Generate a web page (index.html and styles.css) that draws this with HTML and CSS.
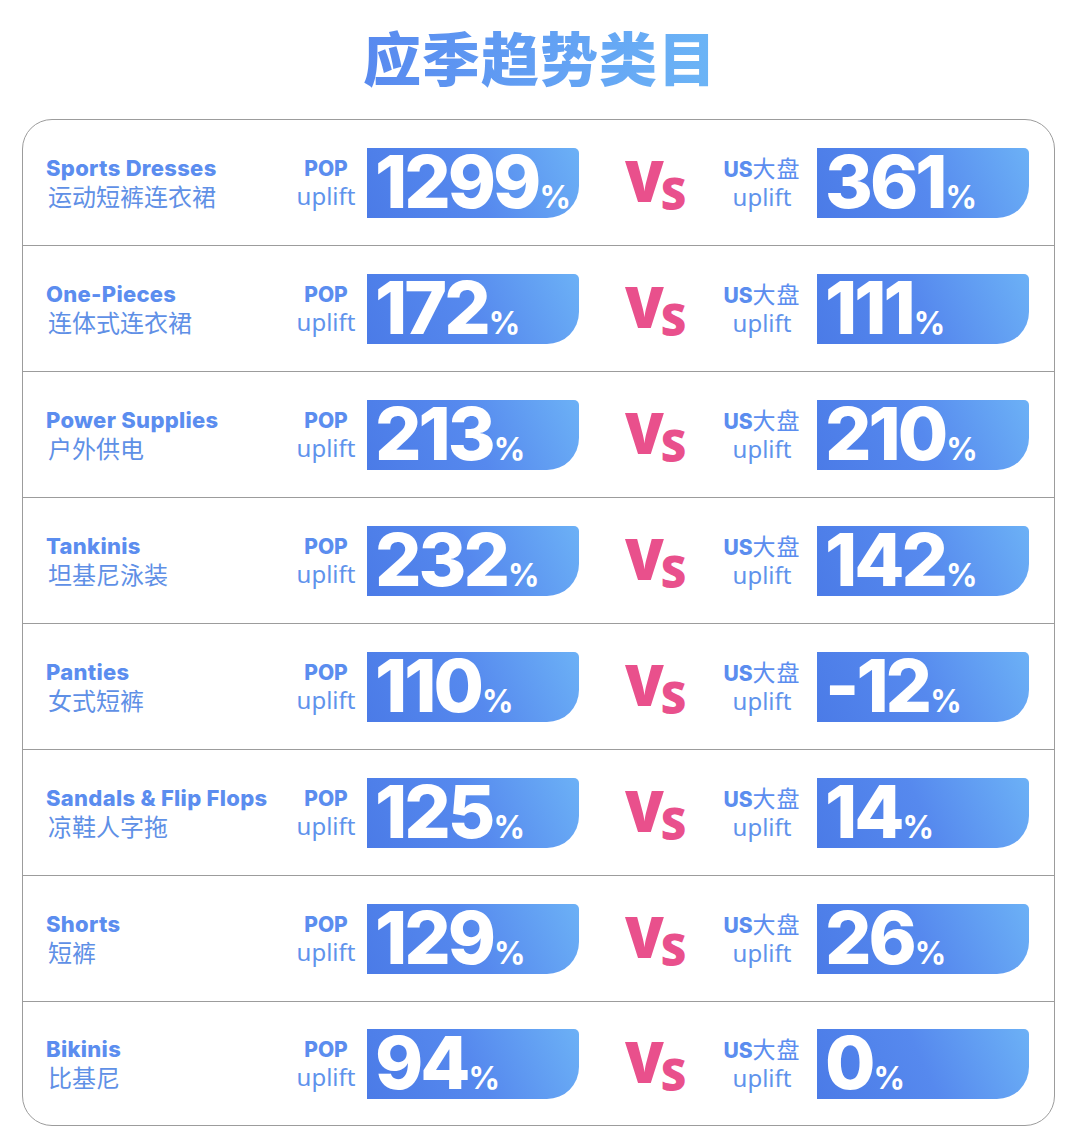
FILE: index.html
```html
<!DOCTYPE html>
<html lang="zh-CN">
<head>
  <meta charset="UTF-8" />
  <meta name="viewport" content="width=device-width, initial-scale=1.0"/>
  <title>应季趋势类目</title>
  <link rel="stylesheet" href="styles.css">
</head>
<body>

<h1 class="title">应季趋势类目</h1>

<div class="card">
  <div class="row">
    <div class="name"><b>Sports Dresses</b><span>运动短裤连衣裙</span></div>
    <div class="label"><b>POP</b><span>uplift</span></div>
    <div class="badge">1299<small>%</small></div>
    <div class="vs">V<i>s</i></div>
    <div class="label us"><b>US<em>大盘</em></b><span>uplift</span></div>
    <div class="badge">361<small>%</small></div>
  </div>

  <div class="row">
    <div class="name"><b>One-Pieces</b><span>连体式连衣裙</span></div>
    <div class="label"><b>POP</b><span>uplift</span></div>
    <div class="badge">172<small>%</small></div>
    <div class="vs">V<i>s</i></div>
    <div class="label us"><b>US<em>大盘</em></b><span>uplift</span></div>
    <div class="badge">111<small>%</small></div>
  </div>

  <div class="row">
    <div class="name"><b>Power Supplies</b><span>户外供电</span></div>
    <div class="label"><b>POP</b><span>uplift</span></div>
    <div class="badge">213<small>%</small></div>
    <div class="vs">V<i>s</i></div>
    <div class="label us"><b>US<em>大盘</em></b><span>uplift</span></div>
    <div class="badge">210<small>%</small></div>
  </div>

  <div class="row">
    <div class="name"><b>Tankinis</b><span>坦基尼泳装</span></div>
    <div class="label"><b>POP</b><span>uplift</span></div>
    <div class="badge">232<small>%</small></div>
    <div class="vs">V<i>s</i></div>
    <div class="label us"><b>US<em>大盘</em></b><span>uplift</span></div>
    <div class="badge">142<small>%</small></div>
  </div>

  <div class="row">
    <div class="name"><b>Panties</b><span>女式短裤</span></div>
    <div class="label"><b>POP</b><span>uplift</span></div>
    <div class="badge">110<small>%</small></div>
    <div class="vs">V<i>s</i></div>
    <div class="label us"><b>US<em>大盘</em></b><span>uplift</span></div>
    <div class="badge">-12<small>%</small></div>
  </div>

  <div class="row">
    <div class="name"><b>Sandals &amp; Flip Flops</b><span>凉鞋人字拖</span></div>
    <div class="label"><b>POP</b><span>uplift</span></div>
    <div class="badge">125<small>%</small></div>
    <div class="vs">V<i>s</i></div>
    <div class="label us"><b>US<em>大盘</em></b><span>uplift</span></div>
    <div class="badge">14<small>%</small></div>
  </div>

  <div class="row">
    <div class="name"><b>Shorts</b><span>短裤</span></div>
    <div class="label"><b>POP</b><span>uplift</span></div>
    <div class="badge">129<small>%</small></div>
    <div class="vs">V<i>s</i></div>
    <div class="label us"><b>US<em>大盘</em></b><span>uplift</span></div>
    <div class="badge">26<small>%</small></div>
  </div>

  <div class="row">
    <div class="name"><b>Bikinis</b><span>比基尼</span></div>
    <div class="label"><b>POP</b><span>uplift</span></div>
    <div class="badge">94<small>%</small></div>
    <div class="vs">V<i>s</i></div>
    <div class="label us"><b>US<em>大盘</em></b><span>uplift</span></div>
    <div class="badge">0<small>%</small></div>
  </div>
</div>

</body>
</html>
```

FILE: styles.css
```css
body {
  margin: 0;
  background: #fff;
  font-family: "Inter", "Noto Sans CJK SC", sans-serif;
}

.title {
  width: 360px;
  height: 70px;
  margin: 0 auto 26px;
  padding-top: 23px;
  line-height: 66px;
  text-align: center;
  font-family: "Noto Sans CJK SC", sans-serif;
  font-size: 58px;
  font-weight: 900;
  letter-spacing: 1px;
  background: linear-gradient(90deg, #5889ef 0%, #64a4f4 60%, #6cb5f6 100%);
  -webkit-background-clip: text;
  background-clip: text;
  color: transparent;
}

.card {
  margin: 0 25px 0 22px;
  border: 1.5px solid #9c9c9c;
  border-radius: 30px;
  overflow: hidden;
}

.row {
  display: grid;
  grid-template-columns: 245px 76px 212px 128px 110px 212px;
  align-items: center;
  height: 125px;
  padding-left: 23px;
  border-bottom: 1px solid #9c9c9c;
}

.row:last-child {
  border-bottom: none;
  height: 123px;
}

.name, .label {
  display: flex;
  flex-direction: column;
  color: #5b8def;
}

.name {
  gap: 1px;
}

.name b {
  font-weight: 800;
  font-size: 22px;
  line-height: 25px;
  letter-spacing: 0.3px;
  white-space: nowrap;
}

.name span {
  font-family: "Noto Sans CJK SC", sans-serif;
  font-size: 24px;
  line-height: 28px;
  color: #5f90e6;
  padding-left: 2px;
}

.label {
  align-items: center;
  padding-right: 6px;
}

.label.us {
  padding-right: 0;
}

.label b {
  font-weight: 800;
  font-size: 21px;
  line-height: 26px;
  white-space: nowrap;
}

.label em {
  font-style: normal;
  font-weight: 400;
  font-family: "Noto Sans CJK SC", sans-serif;
  font-size: 23px;
  letter-spacing: 1px;
}

.label span {
  font-family: "Noto Sans", sans-serif;
  font-size: 24px;
  line-height: 28px;
  color: #5f93ec;
}

.badge {
  height: 70px;
  box-sizing: border-box;
  padding: 0 0 0 8px;
  border-radius: 0 5px 32px 0;
  background: linear-gradient(65deg, #4b7be7 0%, #5689ee 50%, #6cb1f6 100%);
  color: #fff;
  font-weight: 800;
  font-size: 73px;
  line-height: 68px;
  letter-spacing: -3px;
  white-space: nowrap;
}

.badge small {
  font-size: 31px;
  font-weight: 700;
  letter-spacing: 0;
  margin-left: 1px;
}

.vs {
  padding-left: 46px;
  color: #e9508c;
  font-family: "Open Sans", sans-serif;
  font-weight: 800;
  font-size: 56px;
  line-height: 56px;
  letter-spacing: -3px;
}

.vs i {
  font-style: normal;
  font-size: 44px;
  position: relative;
  top: 8px;
  text-transform: uppercase;
}
```
